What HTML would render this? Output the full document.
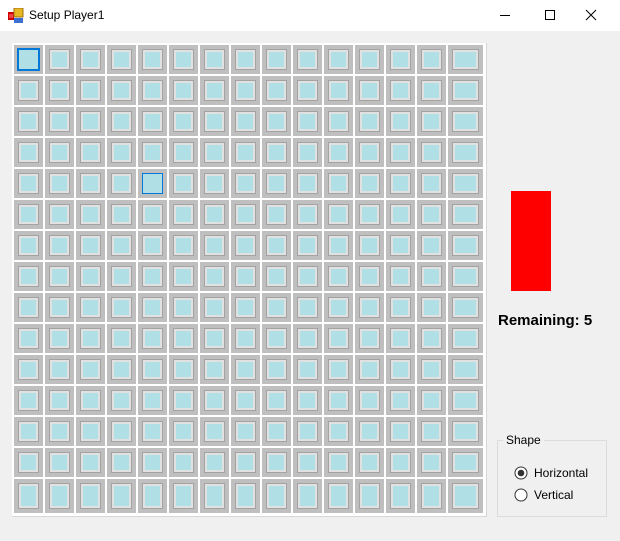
<!DOCTYPE html>
<html><head><style>
body{margin:0;width:620px;height:541px;background:#f0f0f0;font-family:"Liberation Sans",sans-serif;position:relative;overflow:hidden}
.tb{position:absolute;left:0;top:0;width:620px;height:31px;background:#fff}
.tt{position:absolute;left:29px;top:8px;font-size:12px;color:#000}
.grid{position:absolute;left:12px;top:43px;width:474px;height:473px;background:#fff;border-right:1px solid #d6d6d6;border-bottom:1px solid #d6d6d6}
.c{position:absolute;background:#bfbfbf}
.i{position:absolute;left:4px;top:4px;right:4px;bottom:4px;border:1px solid #a3a3a3;background:#e1e1e1}
.f{position:absolute;left:2px;top:2px;right:2px;bottom:2px;background:#b0e0e6}
.s2{border:2px solid #0078d7;background:#b0e0e6;left:3px;top:3px;right:3px;bottom:3px}
.s1{border:1px solid #0078d7;background:#b0e0e6}
</style></head><body>
<div class="tb">
<svg style="position:absolute;left:8px;top:8px" width="16" height="16"><rect x="0" y="4" width="6" height="8" fill="#c00"/><rect x="1" y="6" width="4" height="4" fill="#e44"/><rect x="6" y="0" width="9" height="9" fill="#e8b820" stroke="#a07010"/><rect x="6" y="10" width="9" height="5" fill="#3c6fd0"/></svg>
<div class="tt">Setup Player1</div>
<svg style="position:absolute;left:500px;top:8px" width="110" height="16"><line x1="0" y1="7.5" x2="10" y2="7.5" stroke="#000"/><rect x="45.5" y="2.5" width="9" height="9" fill="none" stroke="#000"/><path d="M86 2 L96 12 M96 2 L86 12" stroke="#000"/></svg>
</div>
<div class="grid" id="g"></div>
<div style="position:absolute;left:511px;top:191px;width:40px;height:100px;background:#f00"></div>
<div style="position:absolute;left:498px;top:312px;font-size:15px;font-weight:bold">Remaining: 5</div>
<div style="position:absolute;left:497px;top:440px;width:108px;height:75px;border:1px solid #dcdcdc"></div>
<div style="position:absolute;left:503px;top:433px;background:#f0f0f0;padding:0 3px;font-size:12px">Shape</div>
<svg style="position:absolute;left:514px;top:466px" width="14" height="36"><circle cx="7" cy="7" r="6" fill="#fff" stroke="#333"/><circle cx="7" cy="7" r="3.3" fill="#333"/><circle cx="7" cy="29" r="6" fill="#fff" stroke="#333"/></svg>
<div style="position:absolute;left:534px;top:466px;font-size:12px">Horizontal</div>
<div style="position:absolute;left:534px;top:488px;font-size:12px">Vertical</div>
<script>
var g=document.getElementById('g'),h='';
for(var r=0;r<15;r++)for(var c=0;c<15;c++){
var x=2+c*31,y=2+r*31,w=c==14?35:29,hh=r==14?34:29;
var inner='<div class="i"><div class="f"></div></div>';
if(r==0&&c==0)inner='<div class="i s2"></div>';
if(r==4&&c==4)inner='<div class="i s1"></div>';
h+='<div class="c" style="left:'+x+'px;top:'+y+'px;width:'+w+'px;height:'+hh+'px">'+inner+'</div>';}
g.innerHTML=h;
</script>
</body></html>
